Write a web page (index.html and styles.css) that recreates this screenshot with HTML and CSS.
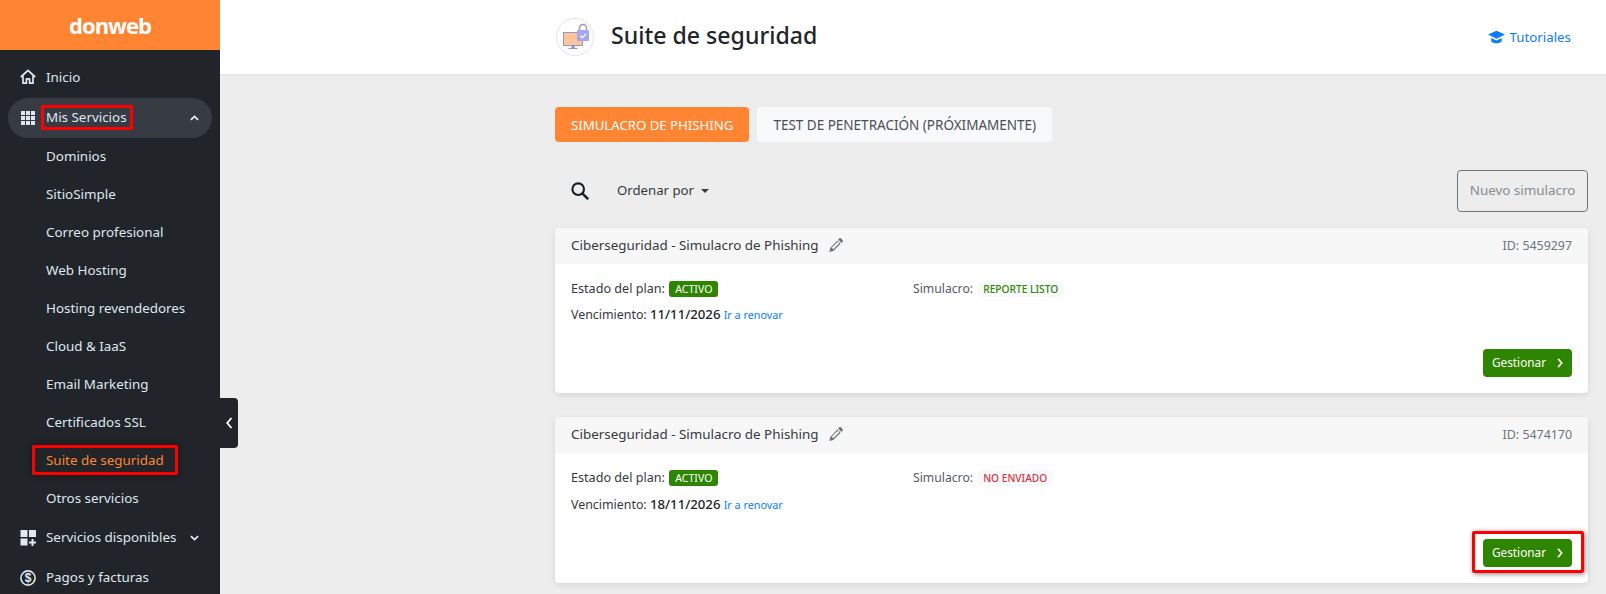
FILE: index.html
```html
<!DOCTYPE html>
<html lang="es">
<head>
<meta charset="utf-8">
<title>Suite de seguridad</title>
<link rel="stylesheet" href="styles.css">
</head>
<body>
<div class="app">
  <aside class="sidebar">
    <div class="brand"><span class="logo">donweb</span></div>
    <nav class="nav">
      <a class="nav-item">
        <svg class="nav-icon" viewBox="0 0 16 16"><path d="M.8 8 8 1.4 15.2 8" fill="none" stroke="#dfe7f0" stroke-width="1.8" stroke-linejoin="round"/><path d="M3 7v7.2h3.4V9.8h3.2v4.4H13V7" fill="none" stroke="#dfe7f0" stroke-width="1.7" stroke-linejoin="round"/></svg>
        <span>Inicio</span>
      </a>
      <a class="nav-item nav-open">
        <svg class="nav-icon grid-icon" viewBox="0 0 14 14"><path fill="#dfe7f0" d="M0 0h4v4H0zM5 0h4v4H5zM10 0h4v4h-4zM0 5h4v4H0zM5 5h4v4H5zM10 5h4v4h-4zM0 10h4v4H0zM5 10h4v4H5zM10 10h4v4h-4z"/></svg>
        <span class="mark mark-mis">Mis Servicios</span>
        <svg class="chev chev-end" viewBox="0 0 10 6"><path d="M1 5 5 1.2 9 5" fill="none" stroke="#e6edf5" stroke-width="2"/></svg>
      </a>
      <a class="sub-item">Dominios</a>
      <a class="sub-item">SitioSimple</a>
      <a class="sub-item">Correo profesional</a>
      <a class="sub-item">Web Hosting</a>
      <a class="sub-item">Hosting revendedores</a>
      <a class="sub-item">Cloud &amp; IaaS</a>
      <a class="sub-item">Email Marketing</a>
      <a class="sub-item">Certificados SSL</a>
      <a class="sub-item sub-active"><span class="mark mark-suite">Suite de seguridad</span></a>
      <a class="sub-item">Otros servicios</a>
      <a class="nav-item">
        <svg class="nav-icon" viewBox="0 0 16 16"><path fill="#dfe7f0" d="M.5 0h7v7h-7zM9 0h7v7H9zM.5 8.5h7v7h-7zM11.5 9h2v2.5H16v2h-2.500V16h-2v-2.500H9v-2h2.500z"/></svg>
        <span>Servicios disponibles</span>
        <svg class="chev chev-near" viewBox="0 0 10 6"><path d="M1 1 5 4.800 9 1" fill="none" stroke="#e6edf5" stroke-width="2"/></svg>
      </a>
      <a class="nav-item">
        <svg class="nav-icon" viewBox="0 0 16 16"><circle cx="8" cy="8" r="7.100" fill="none" stroke="#dfe7f0" stroke-width="1.600"/><text x="8" y="12.200" class="dollar">$</text></svg>
        <span>Pagos y facturas</span>
      </a>
    </nav>
    <div class="collapse"><svg viewBox="0 0 7 12"><path d="M5.500 1 1.200 6l4.300 5" fill="none" stroke="#fff" stroke-width="1.800"/></svg></div>
  </aside>
  <main class="main">
    <header class="topbar">
      <div class="top-inner">
        <div class="title-wrap">
          <span class="page-icon">
            <svg viewBox="0 0 38 38" width="38" height="38">
              <circle cx="19" cy="19" r="18.500" fill="#fff" stroke="#e2e1fb" stroke-width="1"/>
              <rect x="7.500" y="14.500" width="19" height="13" fill="#ffc59a" stroke="#9a97c0" stroke-width="1"/>
              <path d="M15.500 27.500h3v2.500h-3z" fill="#8f8bd8"/>
              <path d="M12.500 30.500h9" stroke="#9a97c0" stroke-width="1.200"/>
              <path d="M23.500 12.500V10a3.500 3.500 0 0 1 7 0v2.500" fill="none" stroke="#9d98b8" stroke-width="1.500"/>
              <rect x="21" y="12" width="12" height="11" rx="1" fill="#a5a6f0"/>
              <path d="m24 17.600 2.200 2.200 3.800-3.800" fill="none" stroke="#fff" stroke-width="1.300"/>
            </svg>
          </span>
          <h1 class="page-title">Suite de seguridad</h1>
        </div>
        <a class="tutorials">
          <svg viewBox="0 0 20 16" width="17" height="14"><path fill="#0d7bff" d="M10 .5 0 5.200l10 4.800 10-4.800zM3.800 9.200v3.200c0 1.600 3 3 6.200 3s6.200-1.400 6.200-3V9.200L10 12.200z"/></svg>
          <span>Tutoriales</span>
        </a>
      </div>
    </header>
    <div class="content">
      <div class="tabs">
        <a class="tab tab-on">SIMULACRO DE PHISHING</a>
        <a class="tab tab-off">TEST DE PENETRACIÓN (PRÓXIMAMENTE)</a>
      </div>
      <div class="toolbar">
        <svg class="search" viewBox="0 0 18 18"><circle cx="7.200" cy="7.200" r="5.800" fill="none" stroke="#15202b" stroke-width="2.100"/><path d="m11.300 11.300 5.900 5.900" stroke="#15202b" stroke-width="2.500"/></svg>
        <span class="sort">Ordenar por</span>
        <span class="caret"></span>
        <button class="new-btn">Nuevo simulacro</button>
      </div>
      <section class="card">
        <div class="card-head">
          <span class="card-title">Ciberseguridad - Simulacro de Phishing</span>
          <svg class="pencil" viewBox="0 0 14 14"><path fill="#6c757d" d="M10.400.3a1 1 0 0 1 1.400 0l1.900 1.900a1 1 0 0 1 0 1.400l-1.300 1.300-3.300-3.300zM8.300 2.400l3.300 3.300-7.300 7.300-4 1 1-4zM2.700 9.700l1.600 1.600 6-6-1.600-1.600z"/></svg>
          <span class="card-id">ID: 5459297</span>
        </div>
        <div class="card-body">
          <div class="info">
            <div class="info-row">
              <div class="plan">Estado del plan: <span class="badge-on">ACTIVO</span></div>
              <div class="sim">Simulacro: <span class="pill pill-ok">REPORTE LISTO</span></div>
            </div>
            <div class="due">Vencimiento: <b>11/11/2026</b> <a class="renew">Ir a renovar</a></div>
          </div>
          <div class="actions"><a class="manage">Gestionar<svg viewBox="0 0 7 12"><path d="M1.200 1 5.600 6l-4.400 5" fill="none" stroke="#fff" stroke-width="2"/></svg></a></div>
        </div>
      </section>
      <section class="card">
        <div class="card-head">
          <span class="card-title">Ciberseguridad - Simulacro de Phishing</span>
          <svg class="pencil" viewBox="0 0 14 14"><path fill="#6c757d" d="M10.400.3a1 1 0 0 1 1.400 0l1.900 1.900a1 1 0 0 1 0 1.400l-1.300 1.300-3.300-3.300zM8.300 2.400l3.300 3.300-7.300 7.300-4 1 1-4zM2.700 9.700l1.600 1.600 6-6-1.600-1.600z"/></svg>
          <span class="card-id">ID: 5474170</span>
        </div>
        <div class="card-body">
          <div class="info">
            <div class="info-row">
              <div class="plan">Estado del plan: <span class="badge-on">ACTIVO</span></div>
              <div class="sim">Simulacro: <span class="pill pill-no">NO ENVIADO</span></div>
            </div>
            <div class="due">Vencimiento: <b>18/11/2026</b> <a class="renew">Ir a renovar</a></div>
          </div>
          <div class="actions"><a class="manage mark-manage">Gestionar<svg viewBox="0 0 7 12"><path d="M1.200 1 5.600 6l-4.400 5" fill="none" stroke="#fff" stroke-width="2"/></svg></a></div>
        </div>
      </section>
    </div>
  </main>
</div>
</body>
</html>
```
FILE: styles.css
```css
* { box-sizing: border-box; }
html, body { margin: 0; height: 100%; }
body { font-family: "Noto Sans", "Open Sans", sans-serif; background: #ededed; color: #212529; overflow: hidden; }
a { text-decoration: none; color: inherit; }

.app { display: flex; height: 594px; overflow: hidden; }

.sidebar { width: 220px; flex: none; background: #212529; position: relative; color: #dfe7f0; }
.brand { height: 50px; background: #ff8533; display: flex; align-items: center; justify-content: center; }
.logo { color: #fff; font-family: "Open Sans", sans-serif; font-size: 22px; font-weight: 700; letter-spacing: -1px; line-height: 1; padding-bottom: 1px; }
.nav { padding: 7px 8px 0; display: flex; flex-direction: column; }
.nav-item { height: 40px; display: flex; align-items: center; padding-left: 12px; font-size: 13.4px; border-radius: 20px; }
.nav-open { background: #373b43; margin-top: 1px; }
.nav-open span, .nav-open ~ .nav-item span { margin-bottom: 2px; }
.nav-icon { width: 16px; height: 16px; margin-right: 10px; flex: none; }
.grid-icon { width: 14px; height: 14px; margin-left: 1px; margin-right: 11px; }
.dollar { font-size: 12px; font-family: "Liberation Sans", sans-serif; font-weight: 700; fill: #dfe7f0; text-anchor: middle; }
.chev { width: 9px; height: 6px; }
.chev-end { margin-left: auto; margin-right: 13px; }
.chev-near { margin-left: 14px; }
.sub-item { height: 38px; display: flex; align-items: center; padding: 0 0 2px 38px; font-size: 13.4px; }
.sub-active { color: #ff8533; }
.mark { display: inline-block; position: relative; line-height: 18px; }
.mark::after { content: ""; position: absolute; border: 3px solid #f00; border-radius: 2px; }
.mark-mis::after { top: -3px; bottom: -4px; left: -5px; right: -6px; border-radius: 0; }
.mark-suite::after { top: -6px; bottom: -6px; left: -14px; right: -14px; box-shadow: 0 0 6px rgba(0,0,0,.45); }
.collapse { position: absolute; left: 220px; top: 398px; width: 18px; height: 50px; background: #212529; border-radius: 0 4px 4px 0; display: flex; align-items: center; justify-content: center; }
.collapse svg { width: 7px; height: 12px; }

.main { flex: 1; min-width: 0; }
.topbar { height: 75px; background: #fff; border-bottom: 1px solid #e2e2e2; padding-left: 336px; padding-right: 35px; }
.top-inner { height: 74px; display: flex; align-items: center; justify-content: space-between; }
.title-wrap { display: flex; align-items: center; gap: 17px; }
.page-icon { width: 38px; height: 38px; display: block; }
.page-icon svg { display: block; }
.page-title { margin: 0 0 2px; font-size: 23.1px; font-weight: 500; color: #212529; line-height: 1; }
.tutorials { display: flex; align-items: center; gap: 5px; color: #0d7bff; font-size: 13.3px; }

.content { padding: 32px 18px 0 335px; }
.tabs { display: flex; gap: 8px; }
.tab { height: 35px; display: flex; align-items: center; padding: 0 16px; border-radius: 4px; }
.tab-on { background: #ff8533; color: #fff; font-size: 13.2px; }
.tab-off { background: #f8f9fa; color: #495057; font-size: 13.5px; }
.toolbar { display: flex; align-items: center; height: 42px; margin-top: 28px; padding-left: 16px; }
.search { width: 18px; height: 18px; }
.sort { margin: 0 0 2px 28px; font-size: 13.2px; color: #343a40; }
.caret { margin-left: 7px; border-top: 4.5px solid #343a40; border-left: 4.5px solid transparent; border-right: 4.5px solid transparent; }
.new-btn { margin-left: auto; width: 131px; height: 42px; background: transparent; border: 1px solid #6c757d; border-radius: 4px; color: #858c93; font: inherit; font-size: 13.4px; padding: 0 0 2px; }
.card { background: #fff; border-radius: 4px; box-shadow: 0 2px 6px rgba(0,0,0,.1); margin-top: 16px; }
.card + .card { margin-top: 24px; }
.card-head { height: 36px; background: #f7f7f7; border-radius: 4px 4px 0 0; display: flex; align-items: center; padding: 0 16px 2px; font-size: 13.4px; }
.card-title { color: #343a40; }
.pencil { width: 14px; height: 14px; margin-left: 10px; }
.card-id { margin-left: auto; color: #6c757d; font-size: 12.4px; }
.card-body { height: 129px; padding: 16px; display: flex; flex-direction: column; justify-content: space-between; font-size: 12.4px; color: #343a40; }
.card + .card .card-body { height: 130px; }
.card + .card .due { margin-top: 9px; }
.info-row { display: flex; align-items: center; height: 18px; margin-top: -1px; }
.plan { width: 342px; font-size: 12.6px; }
.sim { color: #555c63; font-size: 12.2px; }
.badge-on { display: inline-block; background: #2e8500; color: #fff; font-size: 10.6px; padding: 0 6px; border-radius: 3px; line-height: 16px; margin-left: 1px; }
.pill { display: inline-block; font-size: 10.2px; font-weight: 500; padding: 0 6px; border-radius: 5px; line-height: 16px; margin-left: 1px; }
.pill-ok { background: #f8f9fa; color: #2e8500; }
.pill-no { background: #f8f9fa; color: #dc3545; }
.due { margin-top: 8px; }
.due b { font-weight: 500; font-size: 13.2px; color: #212529; }
.renew { color: #0d7bff; font-size: 10.8px; }
.actions { display: flex; justify-content: flex-end; }
.manage { width: 89px; height: 28px; padding-bottom: 2px; background: #2e8500; border-radius: 4px; color: #fff; font-size: 11.8px; display: flex; align-items: center; justify-content: center; gap: 11px; }
.manage svg { width: 6px; height: 10px; margin-top: 2px; }
.mark-manage { position: relative; }
.mark-manage::after { content: ""; position: absolute; top: -8px; bottom: -6px; left: -11px; right: -12px; border: 3px solid #f00; border-radius: 2px; box-shadow: 1px 1px 5px rgba(0,0,0,.5); }
```
